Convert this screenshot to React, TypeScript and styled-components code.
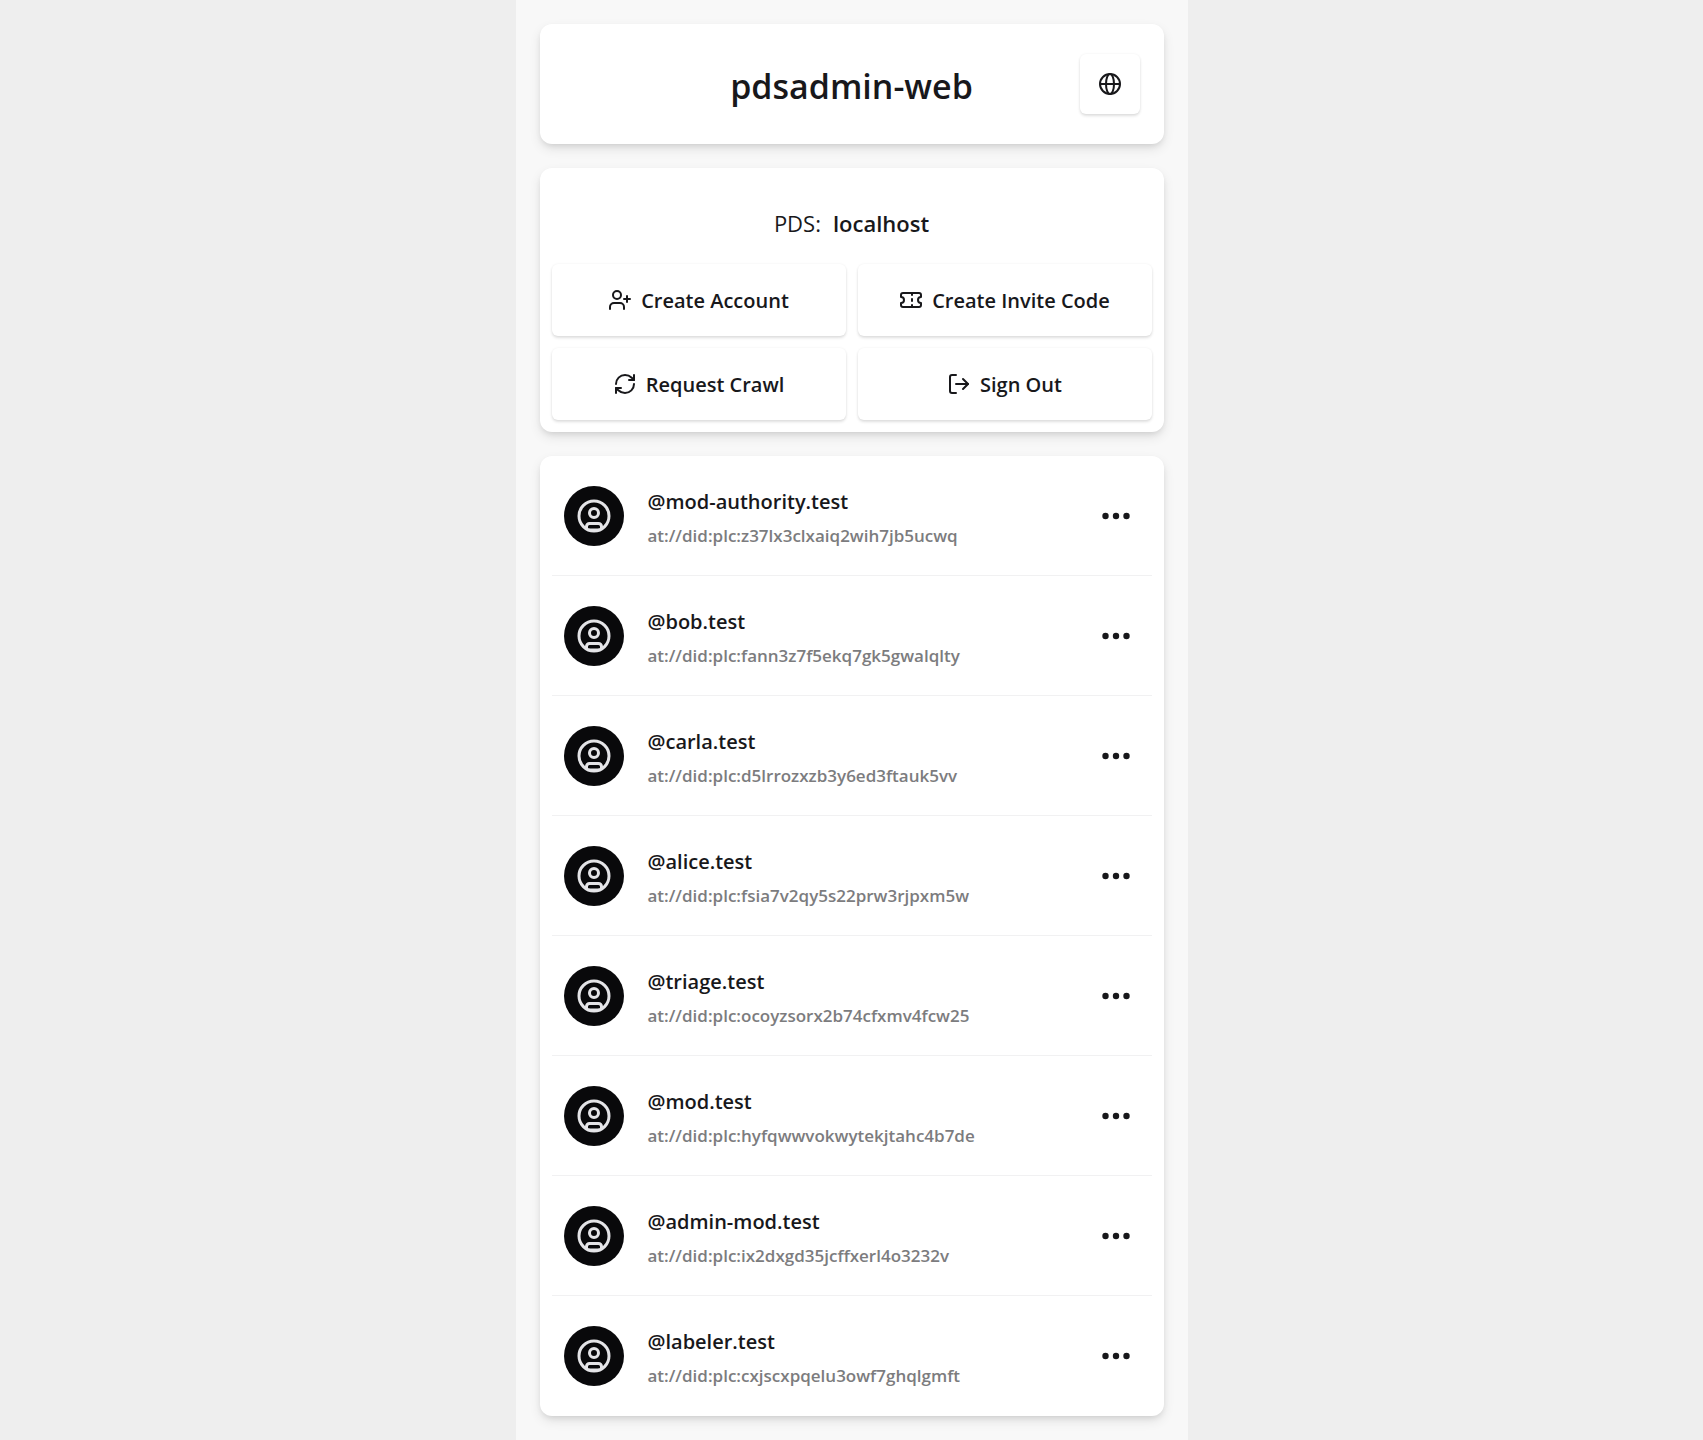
import React from 'react';
import styled, { createGlobalStyle } from 'styled-components';
import { LogOut, RefreshCw, Ticket, UserPlus } from 'lucide-react';

const GlobalStyle = createGlobalStyle`
  *, *::before, *::after { box-sizing: border-box; }
  body {
    margin: 0;
    background: #eeeeee;
    color: #18181b;
    font-family: 'Segoe UI', 'Open Sans', 'Noto Sans', sans-serif;
    font-size: 20px;
    line-height: 30px;
  }
  h1, p, ul { margin: 0; padding: 0; }
  button { font: inherit; color: inherit; border: 0; cursor: pointer; }
`;

const Page = styled.main`
  display: flex;
  flex-direction: column;
  gap: 24px;
  max-width: 672px;
  min-height: 100vh;
  margin: 0 auto;
  padding: 24px;
  background: #f8f8f8;
`;

const Card = styled.section`
  background: #ffffff;
  border-radius: 12px;
  box-shadow: 0 5px 12px rgba(0, 0, 0, 0.09), 0 3px 6px -2px rgba(0, 0, 0, 0.12);
`;

const Header = styled(Card).attrs({ as: 'header' })`
  display: grid;
  grid-template-columns: 60px 1fr 60px;
  align-items: center;
  padding: 30px 24px;
`;

const Title = styled.h1`
  grid-column: 2;
  padding-top: 4px;
  text-align: center;
  font-size: 34px;
  line-height: 56px;
  font-weight: 600;
`;

const Button = styled.button`
  display: flex;
  align-items: center;
  justify-content: center;
  gap: 9px;
  background: #ffffff;
  border-radius: 6px;
  box-shadow: 0 2px 3px rgba(0, 0, 0, 0.12), 0 0 3px rgba(0, 0, 0, 0.05);
`;

const IconButton = styled(Button)`
  width: 60px;
  height: 60px;
`;

const ActionButton = styled(Button)`
  height: 72px;
  font-weight: 600;
`;

const Label = styled.span`
  padding-top: 2px;
`;

const Panel = styled(Card)`
  padding: 36px 12px 12px;
`;

const Server = styled.p`
  display: flex;
  justify-content: center;
  gap: 12px;
  margin-bottom: 22px;
  font-size: 22px;
  line-height: 38px;
`;

const Host = styled.strong`
  font-weight: 600;
`;

const Actions = styled.div`
  display: grid;
  grid-template-columns: 1fr 1fr;
  gap: 12px;
`;

const AccountList = styled(Card).attrs({ as: 'ul' })`
  padding: 0 12px;
  list-style: none;
`;

const Account = styled.li`
  display: flex;
  align-items: center;
  gap: 24px;
  height: 120px;
  padding: 0 12px;

  & + & { box-shadow: 0 -1px 0 #f1f1f2; }
`;

const Avatar = styled.span`
  display: flex;
  align-items: center;
  justify-content: center;
  width: 60px;
  height: 60px;
  border-radius: 50%;
  background: #09090b;
  color: #e4e4e7;
`;

const Identity = styled.div`
  flex: 1;
  min-width: 0;
  padding-top: 6px;
  font-weight: 600;
  line-height: 34px;
`;

const Handle = styled.p`
  font-size: 20px;
`;

const Uri = styled.p`
  font-size: 17px;
  color: #7c7c7e;
`;

const MenuButton = styled.button`
  display: flex;
  align-items: center;
  justify-content: center;
  width: 48px;
  height: 48px;
  padding: 0;
  background: transparent;
`;

const accounts = [
  ['mod-authority.test', 'z37lx3clxaiq2wih7jb5ucwq'],
  ['bob.test', 'fann3z7f5ekq7gk5gwalqlty'],
  ['carla.test', 'd5lrrozxzb3y6ed3ftauk5vv'],
  ['alice.test', 'fsia7v2qy5s22prw3rjpxm5w'],
  ['triage.test', 'ocoyzsorx2b74cfxmv4fcw25'],
  ['mod.test', 'hyfqwwvokwytekjtahc4b7de'],
  ['admin-mod.test', 'ix2dxgd35jcffxerl4o3232v'],
  ['labeler.test', 'cxjscxpqelu3owf7ghqlgmft'],
];

const GlobeIcon = () => (
  <svg width="24" height="24" viewBox="0 0 24 24" fill="none" stroke="currentColor" strokeWidth="2" aria-hidden="true">
    <circle cx="12" cy="12" r="10" />
    <ellipse cx="12" cy="12" rx="4" ry="10" />
    <path d="M2 12h20" />
  </svg>
);

const PersonIcon = () => (
  <svg width="36" height="36" viewBox="0 0 36 36" fill="none" stroke="currentColor" strokeWidth="3" aria-hidden="true">
    <circle cx="18" cy="18" r="15" />
    <circle cx="18" cy="15" r="4.5" />
    <path d="M10.5 30v-1.5a3 3 0 0 1 3-3h9a3 3 0 0 1 3 3V30" />
    <path d="M12 31.5h12" strokeWidth="2" />
  </svg>
);

const DotsIcon = () => (
  <svg width="30" height="8" viewBox="0 0 30 8" fill="currentColor" aria-hidden="true">
    <circle cx="4.5" cy="4" r="3.2" />
    <circle cx="15" cy="4" r="3.2" />
    <circle cx="25.5" cy="4" r="3.2" />
  </svg>
);

export default function App() {
  return (
    <>
      <GlobalStyle />
      <Page>
        <Header>
          <Title>pdsadmin-web</Title>
          <IconButton type="button" aria-label="Language"><GlobeIcon /></IconButton>
        </Header>
        <Panel>
          <Server><span>PDS:</span><Host>localhost</Host></Server>
          <Actions>
            <ActionButton type="button"><UserPlus size={24} /><Label>Create Account</Label></ActionButton>
            <ActionButton type="button"><Ticket size={24} /><Label>Create Invite Code</Label></ActionButton>
            <ActionButton type="button"><RefreshCw size={24} /><Label>Request Crawl</Label></ActionButton>
            <ActionButton type="button"><LogOut size={24} /><Label>Sign Out</Label></ActionButton>
          </Actions>
        </Panel>
        <AccountList>
          {accounts.map(([handle, did]) => (
            <Account key={did}>
              <Avatar><PersonIcon /></Avatar>
              <Identity>
                <Handle>@{handle}</Handle>
                <Uri>at://did:plc:{did}</Uri>
              </Identity>
              <MenuButton type="button" aria-label={`Options for ${handle}`}><DotsIcon /></MenuButton>
            </Account>
          ))}
        </AccountList>
      </Page>
    </>
  );
}
